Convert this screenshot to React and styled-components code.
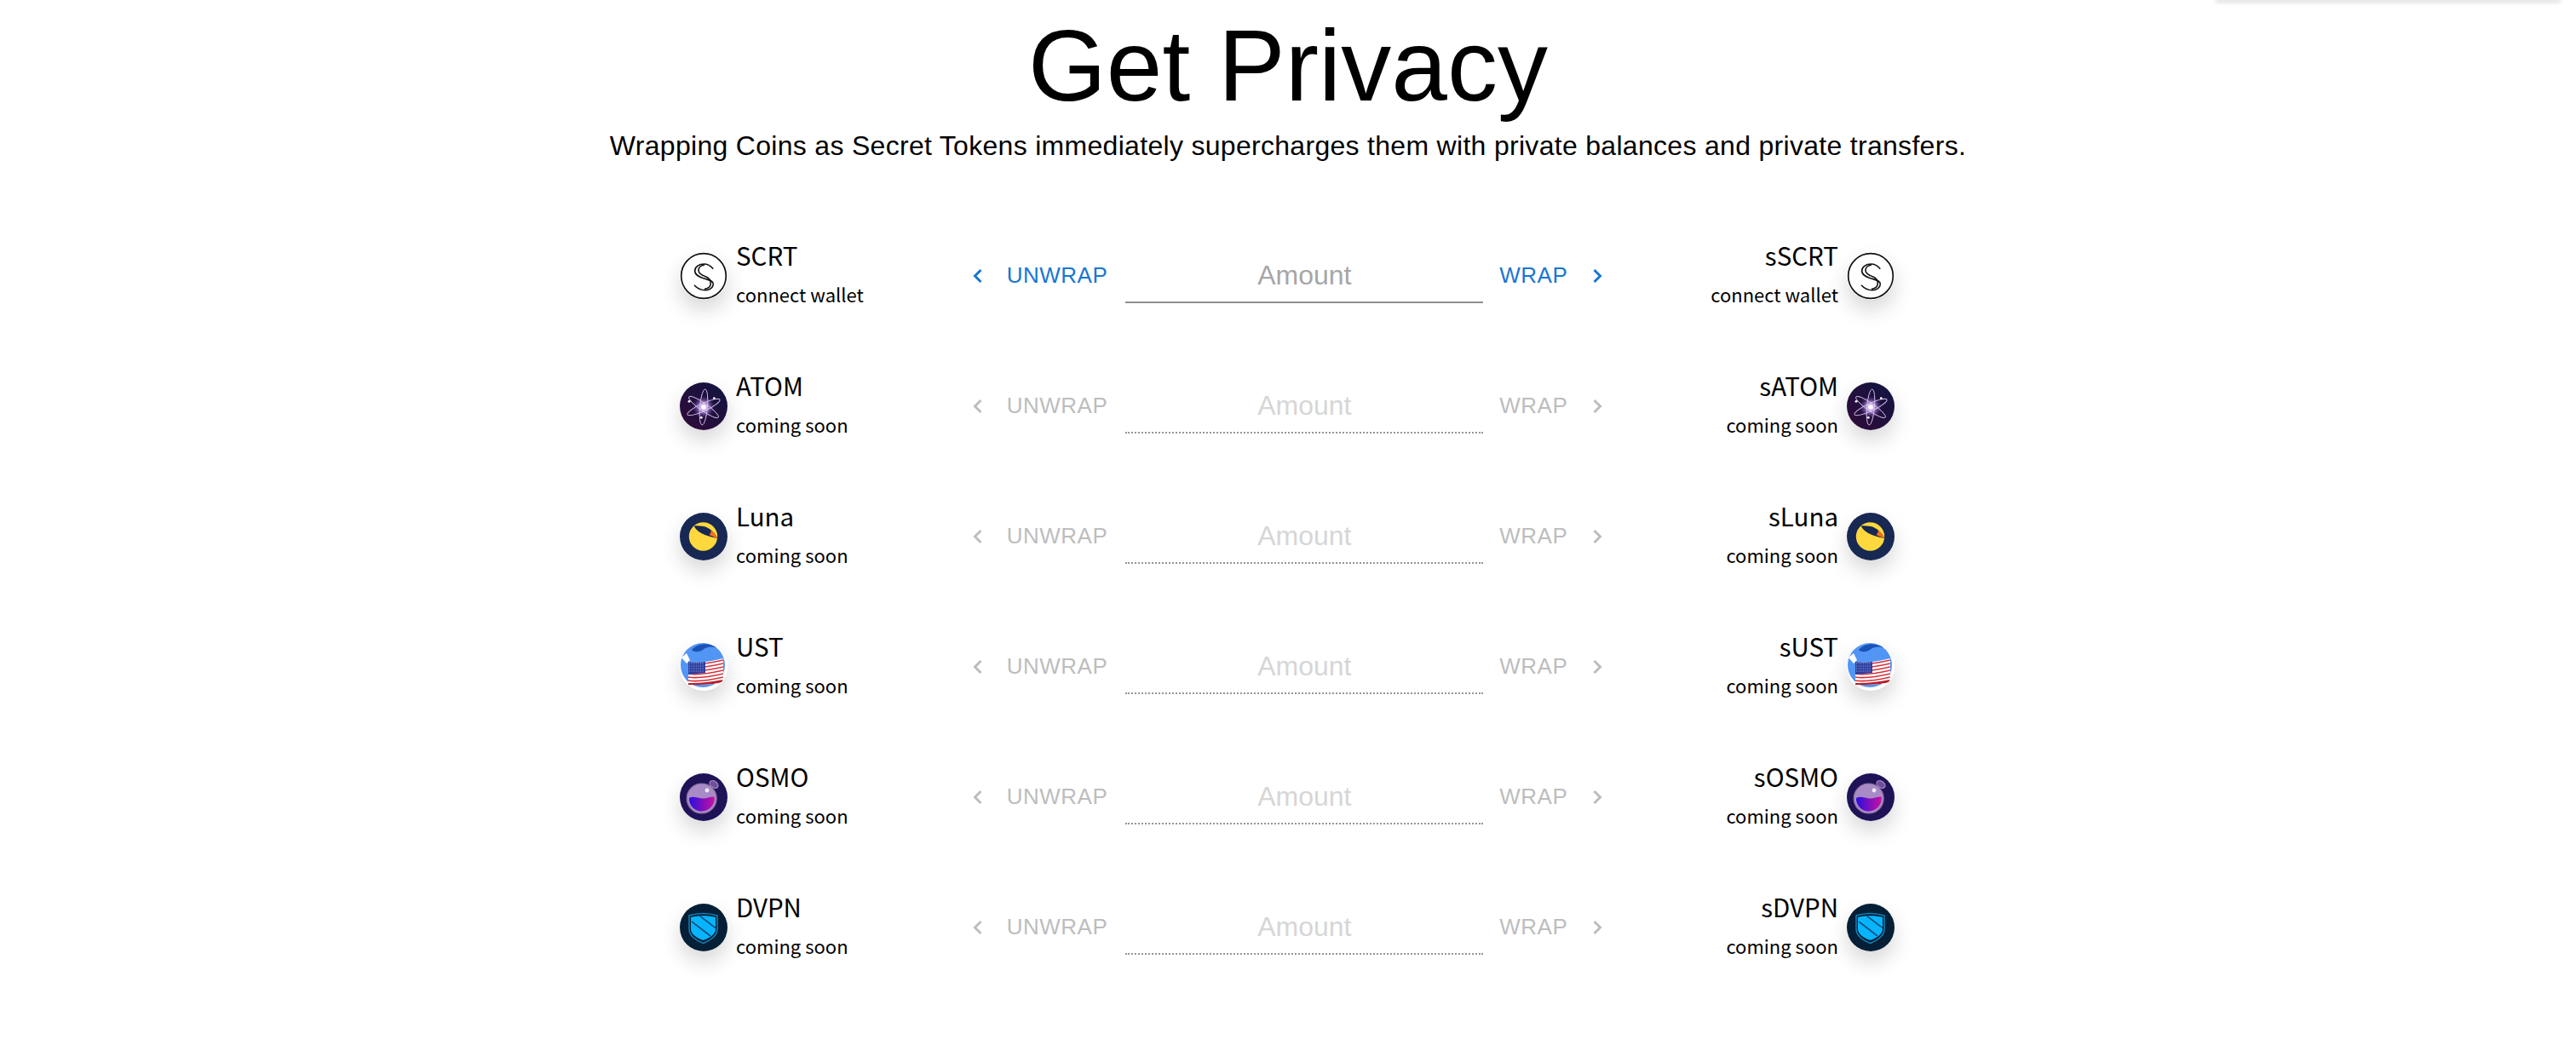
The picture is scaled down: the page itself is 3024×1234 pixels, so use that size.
import React from 'react';
import styled, { createGlobalStyle } from 'styled-components';

const GlobalStyle = createGlobalStyle`
  html, body {
    margin: 0;
    padding: 0;
    background: #fff;
    color: #000;
    font-family: "Liberation Sans", Arial, sans-serif;
  }
`;

const Page = styled.main`
  width: 3024px;
  min-height: 1234px;
  display: flex;
  flex-direction: column;
  align-items: center;
  overflow: hidden;
`;

const TopBar = styled.div`
  align-self: flex-end;
  width: 403px;
  height: 0;
  margin-right: 19px;
  box-shadow: 0 1px 5px 1px rgba(0, 0, 0, 0.28);
`;

const Title = styled.h1`
  margin: 0;
  padding-top: 10px;
  font-size: 118px;
  line-height: 135px;
  font-weight: 400;
  text-align: center;
`;

const Subtitle = styled.p`
  margin: 6px 0 0;
  font-size: 32px;
  line-height: 40px;
  letter-spacing: 0.3px;
  text-align: center;
`;

const Rows = styled.section`
  width: 1426px;
  margin: 56px 2px 0 0;
  display: flex;
  flex-direction: column;
`;

const Row = styled.div`
  height: 153px;
  display: grid;
  grid-template-columns: 1fr auto 1fr;
  align-items: center;
`;

const Token = styled.div`
  display: flex;
  align-items: center;
  gap: 10px;
  flex-direction: ${(p) => (p.$right ? 'row-reverse' : 'row')};
  text-align: ${(p) => (p.$right ? 'right' : 'left')};
`;

const CoinFrame = styled.div`
  width: 56px;
  height: 56px;
  flex: none;
  border-radius: 50%;
  background: #fff;
  box-shadow: 0 12px 24px rgba(0, 0, 0, 0.16);
  svg {
    display: block;
  }
`;

const TokenText = styled.div`
  font-family: "Noto Sans CJK SC", "Noto Sans", sans-serif;
`;

const TokenName = styled.div`
  font-size: 29.5px;
  line-height: 34px;
  margin-bottom: 8px;
`;

const TokenStatus = styled.div`
  font-size: 22px;
  line-height: 42px;
`;

const Controls = styled.div`
  display: flex;
  align-items: center;
  padding-left: 1px;
`;

const Action = styled.button`
  display: flex;
  align-items: center;
  gap: ${(p) => (p.$right ? '29px' : '28px')};
  flex-direction: ${(p) => (p.$right ? 'row-reverse' : 'row')};
  padding: 0;
  border: 0;
  background: none;
  font-family: "Liberation Sans", Arial, sans-serif;
  font-size: 26px;
  letter-spacing: 0.5px;
  color: ${(p) => (p.disabled ? '#bdbdbd' : '#1a76d2')};
`;

const AmountInput = styled.input`
  width: 420px;
  height: 64px;
  margin: 0 19px 0 21px;
  padding: 2px 0 0;
  box-sizing: border-box;
  border: 0;
  border-bottom: 2px ${(p) => (p.disabled ? 'dotted #969696' : 'solid #8f8f8f')};
  outline: 0;
  background: none;
  font-family: "Liberation Sans", Arial, sans-serif;
  font-size: 32px;
  text-align: center;
  &::placeholder {
    color: ${(p) => (p.disabled ? '#d6d6d6' : '#a6a6a6')};
    opacity: 1;
  }
`;

const Chevron = ({ right }) => (
  <svg width="12" height="18" viewBox="0 0 12 18" fill="none">
    <path
      d={right ? 'M2.5 2 L9.5 9 L2.5 16' : 'M9.5 2 L2.5 9 L9.5 16'}
      stroke="currentColor"
      strokeWidth="3"
    />
  </svg>
);

const ScrtIcon = () => (
  <svg width="56" height="56" viewBox="0 0 56 56" fill="none">
    <circle cx="28" cy="28" r="26.3" fill="#fff" stroke="#111" strokeWidth="1.7" />
    <g stroke="#111" strokeWidth="1.6">
      <path d="M39.3 19.7 C36 16 32 14 28.7 14 C22 14 17.7 17.5 17.7 22 C17.7 27 23 29 27 30.5 C33 32.5 39.3 33 39.3 37.5 C39.3 41.5 35 44.7 30 44.7 C25 44.7 20 42 17 38.7" />
      <path d="M29 15 C25 15.5 22 18 22 21.5 C22 26 27.5 28 32 29.5 C35 31 36.3 34 36.3 37 C36.3 40.5 33 43 29 43.2" />
    </g>
  </svg>
);

const AtomIcon = () => (
  <svg width="56" height="56" viewBox="0 0 56 56" fill="none">
    <defs>
      <linearGradient id="atomBg" x1="0.9" y1="0.1" x2="0.1" y2="0.9">
        <stop offset="0" stopColor="#131440" />
        <stop offset="1" stopColor="#2e0b3a" />
      </linearGradient>
      <radialGradient id="atomGlow">
        <stop offset="0" stopColor="#ffffff" />
        <stop offset="0.3" stopColor="#c9a6ea" />
        <stop offset="1" stopColor="#6a3fa0" stopOpacity="0" />
      </radialGradient>
    </defs>
    <circle cx="28" cy="28" r="28" fill="url(#atomBg)" />
    <circle cx="28" cy="29" r="13" fill="url(#atomGlow)" />
    <g stroke="#d8c8f0" strokeWidth="0.9">
      <ellipse cx="28" cy="29" rx="4.5" ry="21" transform="rotate(5 28 29)" />
      <ellipse cx="28" cy="29" rx="4.5" ry="21" transform="rotate(65 28 29)" />
      <ellipse cx="28" cy="29" rx="4.5" ry="21" transform="rotate(-55 28 29)" />
    </g>
    <circle cx="28" cy="29" r="2.8" fill="#fff" />
    <circle cx="11" cy="22.3" r="1.4" fill="#fff" />
    <circle cx="40.3" cy="18.7" r="1.4" fill="#fff" />
    <circle cx="25.3" cy="41.3" r="1.4" fill="#fff" />
  </svg>
);

const LunaIcon = () => (
  <svg width="56" height="56" viewBox="0 0 56 56" fill="none">
    <circle cx="28" cy="28" r="28" fill="#172852" />
    <circle cx="27.5" cy="28" r="16.7" fill="#ffd83d" />
    <path d="M16.7 15.3 C19 22 29 27.5 44.5 30 C41 23 34 17 28 16 C24 15.3 20 15 16.7 15.3 Z" fill="#172852" />
    <path d="M36.7 20.7 C40 23 42.5 26 44.5 30 C41 29 37.5 27.5 34.5 26 C36 24.5 37 22.5 36.7 20.7 Z" fill="#f2711c" />
  </svg>
);

const UstIcon = () => (
  <svg width="56" height="56" viewBox="0 0 56 56" fill="none">
    <defs>
      <clipPath id="ustFlag">
        <path d="M10 22 C24 24 38 21 51 18 L51 41 Q51 46 46 47 C34 49 20 49 10 49 Z" />
      </clipPath>
    </defs>
    <circle cx="28" cy="28" r="28" fill="#fff" />
    <circle cx="27" cy="26" r="26" fill="#5296f5" />
    <path d="M14 8 C22 -1 36 0 44 6 C36 3 31 5 27 8 C22 11 17 11 14 8 Z" fill="#1a52b8" />
    <path d="M2 17 L8 12 L12 20 L8 24 Z" fill="#fff" />
    <g clipPath="url(#ustFlag)">
      <rect x="10" y="17" width="42" height="34" fill="#fff" />
      <g stroke="#d6303a" strokeWidth="1.7">
        <path d="M10 24 C24 26 38 23 51 20" />
        <path d="M10 28 C24 30 38 27 51 24" />
        <path d="M10 32 C24 34 38 31 51 28" />
        <path d="M10 36 C24 38 38 35 51 32" />
        <path d="M10 40 C24 42 38 39 51 36" />
        <path d="M10 44 C24 46 38 43 51 40" />
        <path d="M10 48.5 C24 49 38 47 51 44.5" strokeWidth="3" stroke="#b81f2a" />
      </g>
      <path d="M10 21 L30 21 L30 35 L10 37 Z" fill="#2f3f9f" />
      <g stroke="#9fb0ea" strokeWidth="1" strokeDasharray="1 1.6">
        <path d="M11 24 H29" />
        <path d="M11 27 H29" />
        <path d="M11 30 H29" />
        <path d="M11 33 H29" />
      </g>
    </g>
  </svg>
);

const OsmoIcon = () => (
  <svg width="56" height="56" viewBox="0 0 56 56" fill="none">
    <defs>
      <linearGradient id="osmoLiquid" x1="0" y1="0" x2="1" y2="0">
        <stop offset="0" stopColor="#2a0fe0" />
        <stop offset="1" stopColor="#c8109f" />
      </linearGradient>
    </defs>
    <circle cx="28" cy="28" r="28" fill="#1f1257" />
    <ellipse cx="40" cy="13" rx="5.5" ry="3.8" transform="rotate(35 40 13)" fill="#6e4f9c" stroke="#a98cc8" strokeWidth="1.2" />
    <circle cx="25.7" cy="29.5" r="17.5" fill="#a88bc6" stroke="#8a7098" strokeWidth="1.2" />
    <path d="M11 29 C17 26 22 30 29 29.5 C33 29 37 27 40.5 27.5 C42 36 35 44.5 25.7 44.5 C17 44.5 10.5 37 11 29 Z" fill="url(#osmoLiquid)" />
    <circle cx="32" cy="20" r="2.4" fill="#f1e9f7" />
  </svg>
);

const DvpnIcon = () => (
  <svg width="56" height="56" viewBox="0 0 56 56" fill="none">
    <defs>
      <clipPath id="dvpnShield">
        <path d="M13 16 C21 13.5 34 13.5 42 16 L42 30 C42 36 34 41 27.5 43 C21 41 13 36 13 30 Z" />
      </clipPath>
    </defs>
    <circle cx="28" cy="28" r="28" fill="#041f36" />
    <path d="M11 14 C21 11 34 11 44 14 L44 30 C44 38 35 44 27.5 46.5 C20 44 11 38 11 30 Z" stroke="#0f82b8" strokeWidth="1.5" />
    <path d="M13 16 C21 13.5 34 13.5 42 16 L42 30 C42 36 34 41 27.5 43 C21 41 13 36 13 30 Z" fill="#07b4ff" />
    <g clipPath="url(#dvpnShield)" stroke="#0b4f7a" strokeWidth="1.6">
      <path d="M14 21 L36 38" />
      <path d="M23 14 L44 30" />
    </g>
  </svg>
);

const tokens = [
  { name: 'SCRT', status: 'connect wallet', Icon: ScrtIcon, active: true },
  { name: 'ATOM', status: 'coming soon', Icon: AtomIcon },
  { name: 'Luna', status: 'coming soon', Icon: LunaIcon },
  { name: 'UST', status: 'coming soon', Icon: UstIcon },
  { name: 'OSMO', status: 'coming soon', Icon: OsmoIcon },
  { name: 'DVPN', status: 'coming soon', Icon: DvpnIcon },
];

export default function App() {
  return (
    <Page>
      <GlobalStyle />
      <TopBar />
      <Title>Get Privacy</Title>
      <Subtitle>Wrapping Coins as Secret Tokens immediately supercharges them with private balances and private transfers.</Subtitle>
      <Rows>
        {tokens.map(({ name, status, Icon, active }) => (
          <Row key={name}>
            <Token>
              <CoinFrame>
                <Icon />
              </CoinFrame>
              <TokenText>
                <TokenName>{name}</TokenName>
                <TokenStatus>{status}</TokenStatus>
              </TokenText>
            </Token>
            <Controls>
              <Action disabled={!active}>
                <Chevron />
                UNWRAP
              </Action>
              <AmountInput placeholder="Amount" disabled={!active} />
              <Action $right disabled={!active}>
                <Chevron right />
                WRAP
              </Action>
            </Controls>
            <Token $right>
              <CoinFrame>
                <Icon />
              </CoinFrame>
              <TokenText>
                <TokenName>s{name}</TokenName>
                <TokenStatus>{status}</TokenStatus>
              </TokenText>
            </Token>
          </Row>
        ))}
      </Rows>
    </Page>
  );
}
